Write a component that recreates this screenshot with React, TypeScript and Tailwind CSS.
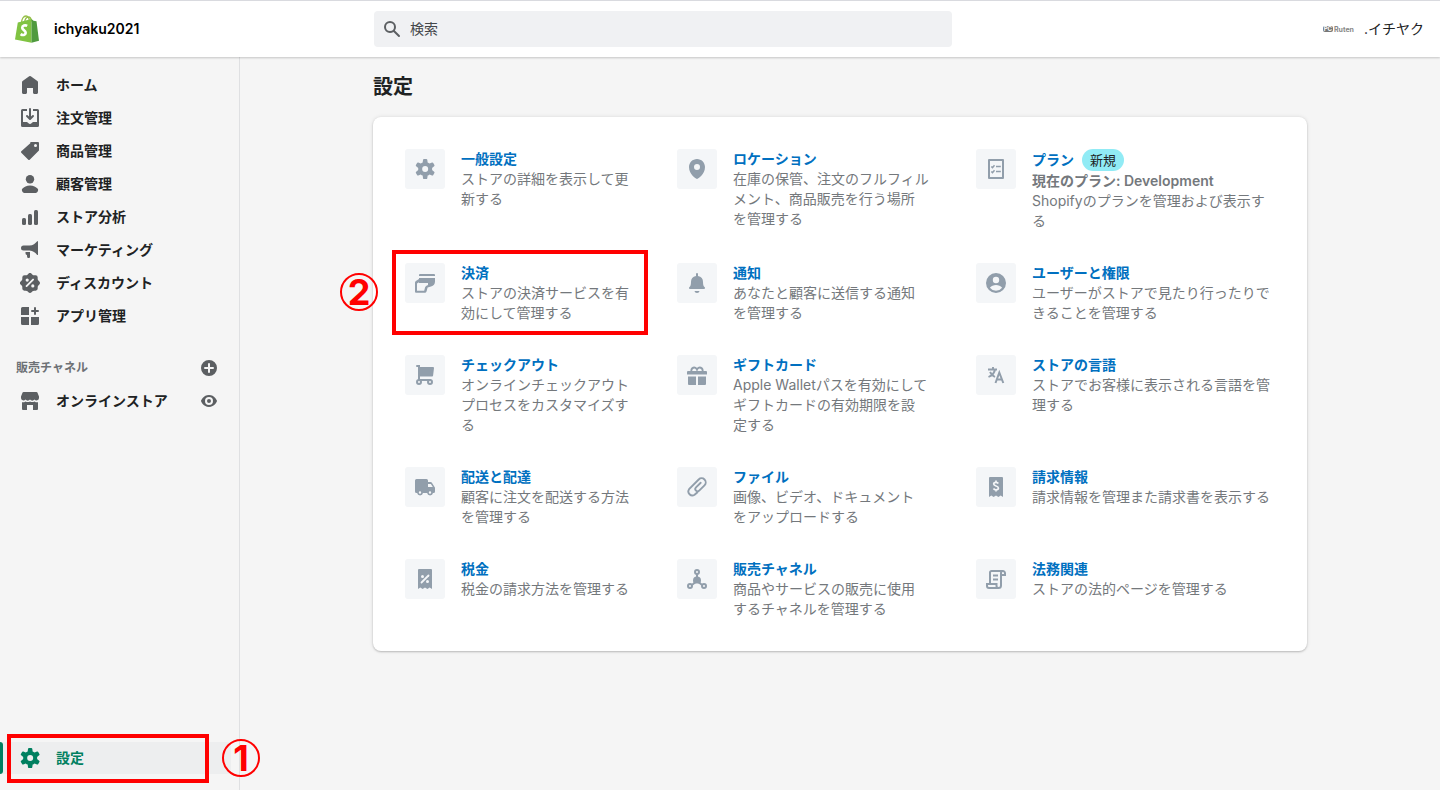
import type { ReactNode } from 'react';

type IconProps = { children: ReactNode; className?: string };

// All icons share a 20x20 grid
const Icon = ({ children, className = 'size-5' }: IconProps) => (
  <svg viewBox="0 0 20 20" fill="currentColor" fillRule="evenodd" aria-hidden="true" className={`${className} shrink-0`}>
    {children}
  </svg>
);

const gear = (
  <path d="M9.027 0a1 1 0 00-.99.859l-.37 2.598A6.993 6.993 0 005.742 4.57l-2.437-.98a1 1 0 00-1.239.428L.934 5.981a1 1 0 00.248 1.287l2.066 1.621a7.06 7.06 0 000 2.222l-2.066 1.621a1 1 0 00-.248 1.287l1.132 1.962a1 1 0 001.239.428l2.438-.979a6.995 6.995 0 001.923 1.113l.372 2.598a1 1 0 00.99.859h2.265a1 1 0 00.99-.859l.371-2.598a6.995 6.995 0 001.924-1.112l2.438.978a1 1 0 001.238-.428l1.133-1.962a1 1 0 00-.249-1.287l-2.065-1.621a7.063 7.063 0 000-2.222l2.065-1.621a1 1 0 00.249-1.287l-1.133-1.962a1 1 0 00-1.239-.428l-2.437.979a6.994 6.994 0 00-1.924-1.113L12.283.86a1 1 0 00-.99-.859H9.027zM10.16 13a3 3 0 100-6 3 3 0 000 6z" />
);

const receipt = <path d="M3 1a1 1 0 011-1h12a1 1 0 011 1v19l-2.3-1.6L12.4 20 10 18.4 7.6 20l-2.3-1.6L3 20V1z" />;

const navItems = [
  {
    label: 'ホーム',
    icon: <path d="M18 7.261V17.5c0 .841-.672 1.5-1.5 1.5h-2c-.828 0-1.5-.659-1.5-1.5V13H7v4.477C7 18.318 6.328 19 5.5 19h-2c-.828 0-1.5-.682-1.5-1.523V7.261a1.5 1.5 0 01.615-1.21l6.59-4.82a1.481 1.481 0 011.59 0l6.59 4.82A1.5 1.5 0 0118 7.26z" />,
  },
  {
    label: '注文管理',
    icon: (
      <>
        <path d="M11 1a1 1 0 10-2 0v7.586L7.707 7.293a1 1 0 00-1.414 1.414l3 3a1 1 0 001.414 0l3-3a1 1 0 00-1.414-1.414L11 8.586V1z" />
        <path d="M3 14V3h4V1H2.5A1.5 1.5 0 001 2.5v15A1.5 1.5 0 002.5 19h15a1.5 1.5 0 001.5-1.5v-15A1.5 1.5 0 0017.5 1H13v2h4v11h-3.5c-.775 0-1.388.662-1.926 1.244l-.11.12A1.994 1.994 0 0110 16a1.994 1.994 0 01-1.463-.637l-.111-.12C7.888 14.664 7.275 14 6.5 14H3z" />
      </>
    ),
  },
  {
    label: '商品管理',
    icon: <path d="M10.293 1.293A1 1 0 0111 1h7a1 1 0 011 1v7a1 1 0 01-.293.707l-9 9a1 1 0 01-1.414 0l-7-7a1 1 0 010-1.414l9-8zM15.5 6a1.5 1.5 0 100-3 1.5 1.5 0 000 3z" />,
  },
  {
    label: '顧客管理',
    icon: (
      <>
        <circle cx="10" cy="5.2" r="4.2" />
        <path d="M2.53 14.469c1.385-1.09 4.141-2.853 7.474-2.853 3.332 0 6.089 1.764 7.474 2.853.618.486.81 1.308.567 2.056l-.333 1.02A2.11 2.11 0 0115.706 19H4.301a2.11 2.11 0 01-2.005-1.455l-.333-1.02c-.245-.748-.052-1.57.567-2.056z" />
      </>
    ),
  },
  {
    label: 'ストア分析',
    icon: (
      <>
        <rect x="2" y="11" width="4" height="7" rx="1.5" />
        <rect x="8" y="7" width="4" height="11" rx="1.5" />
        <rect x="14" y="3" width="4" height="15" rx="1.5" />
      </>
    ),
  },
  {
    label: 'マーケティング',
    icon: (
      <>
        <path d="M17.2 1.2a.5.5 0 01.8.4v13a.5.5 0 01-.8.4C15.4 12.8 13 10.5 9.5 10.5h-6a2.5 2.5 0 010-5h6c3.5 0 5.9-2.2 7.7-4.3z" />
        <path d="M5.5 12H10v5a1 1 0 01-1 1h-.8a1 1 0 01-1-.8L6.9 15a2 2 0 01-1.4-2z" />
      </>
    ),
  },
  {
    label: 'ディスカウント',
    icon: <path d="M11.566.66a2.189 2.189 0 00-3.132 0l-.962.985a2.189 2.189 0 01-1.592.66l-1.377-.017a2.189 2.189 0 00-2.215 2.215l.016 1.377a2.189 2.189 0 01-.66 1.592l-.984.962a2.189 2.189 0 000 3.132l.985.962c.428.418.667.994.66 1.592l-.017 1.377a2.189 2.189 0 002.215 2.215l1.377-.016a2.189 2.189 0 011.592.66l.962.984c.859.88 2.273.88 3.132 0l.962-.985a2.189 2.189 0 011.592-.66l1.377.017a2.189 2.189 0 002.215-2.215l-.016-1.377a2.189 2.189 0 01.66-1.592l.984-.962c.88-.859.88-2.273 0-3.132l-.985-.962a2.189 2.189 0 01-.66-1.592l.017-1.377a2.189 2.189 0 00-2.215-2.215l-1.377.016a2.189 2.189 0 01-1.592-.66L11.566.66zM7.2 8.7a1.6 1.6 0 100-3.2 1.6 1.6 0 000 3.2zM13.7 5.9a.9.9 0 00-1.3 0l-6.5 6.5a.9.9 0 001.3 1.3l6.5-6.5a.9.9 0 000-1.3zM12.8 14.5a1.6 1.6 0 100-3.2 1.6 1.6 0 000 3.2z" />,
  },
  {
    label: 'アプリ管理',
    icon: (
      <>
        <path d="M1 2.5A1.5 1.5 0 012.5 1H9v8H1zM1 11h8v8H2.5A1.5 1.5 0 011 17.5zM11 11h8v6.5a1.5 1.5 0 01-1.5 1.5H11z" />
        <path d="M15 1a1 1 0 011 1v2h2a1 1 0 110 2h-2v2a1 1 0 11-2 0V6h-2a1 1 0 110-2h2V2a1 1 0 011-1z" />
      </>
    ),
  },
];

type Setting = {
  title: string;
  text: string;
  icon: ReactNode;
  badge?: string;
  plan?: string;
  step?: string;
};

const settings: Setting[] = [
  { title: '一般設定', text: 'ストアの詳細を表示して更\n新する', icon: gear },
  {
    title: 'ロケーション',
    text: '在庫の保管、注文のフルフィル\nメント、商品販売を行う場所\nを管理する',
    icon: <path d="M10 0C5.589 0 2 3.589 2 8c0 7.495 7.197 11.694 7.504 11.869a.996.996 0 00.992 0C10.803 19.694 18 15.495 18 8c0-4.412-3.589-8-8-8zm0 11a3 3 0 110-6 3 3 0 010 6z" />,
  },
  {
    title: 'プラン',
    text: 'Shopifyのプランを管理および表示す\nる',
    badge: '新規',
    plan: '現在のプラン: Development',
    icon: (
      <>
        <path d="M3 0h14a1 1 0 011 1v18a1 1 0 01-1 1H3a1 1 0 01-1-1V1a1 1 0 011-1zm1 2v16h12V2z" />
        <path d="M5.3 7.5l1.2 1.2 2-2.4M5.3 12.5l1.2 1.2 2-2.4M10 7.5h4.800M10 12.5h4.800" fill="none" stroke="currentColor" strokeWidth="1.500" />
      </>
    ),
  },
  {
    title: '決済',
    text: 'ストアの決済サービスを有\n効にして管理する',
    step: '2',
    icon: (
      <>
        <path d="M5 1h14a1 1 0 011 1v1H4V2a1 1 0 011-1z" />
        <path d="M4 5h16v3.5a5 5 0 01-4 4.900L12.600 14.500l-1 3.800a2 2 0 01-2 1.500H1a1 1 0 01-1-1V9.700a2 2 0 01.9-1.700L4 6zM4 10v-.8L2 10.400V17.800h7.200l.9-3.500a2.500 2.500 0 011.400-1.600L13 12v-2z" />
      </>
    ),
  },
  {
    title: '通知',
    text: 'あなたと顧客に送信する通知\nを管理する',
    icon: (
      <>
        <path d="M10 0a1 1 0 011 1v2.03A6 6 0 0116 9c0 2.8.6 4.5 1.700 5.300.7.6.3 1.700-.6 1.700H2.900c-.9 0-1.300-1.100-.6-1.700C3.400 13.500 4 11.800 4 9a6 6 0 015-5.970V1a1 1 0 011-1z" />
        <path d="M7.500 18h5c-.2 1.200-1.200 2-2.500 2s-2.300-.8-2.500-2z" />
      </>
    ),
  },
  {
    title: 'ユーザーと権限',
    text: 'ユーザーがストアで見たり行ったりで\nきることを管理する',
    icon: <path d="M10 0a10 10 0 100 20 10 10 0 000-20zm0 3.800a3.200 3.200 0 110 6.400 3.200 3.200 0 010-6.400zM3.900 14.800C5.300 13 7.500 12 10 12s4.700 1 6.100 2.800A7.700 7.700 0 0110 17.800a7.700 7.700 0 01-6.100-3z" />,
  },
  {
    title: 'チェックアウト',
    text: 'オンラインチェックアウト\nプロセスをカスタマイズす\nる',
    icon: (
      <>
        <path d="M2 1h2v13M4 15h11" fill="none" stroke="currentColor" strokeWidth="2" strokeLinecap="round" />
        <path d="M4 2h14a1 1 0 011 1.100l-.9 7.500a1 1 0 01-1 .9H4z" />
        <g fill="#f4f6f8" stroke="currentColor" strokeWidth="2">
          <circle cx="4" cy="17" r="2" />
          <circle cx="15" cy="17" r="2" />
        </g>
      </>
    ),
  },
  {
    title: 'ギフトカード',
    text: 'Apple Walletパスを有効にして\nギフトカードの有効期限を設\n定する',
    icon: (
      <>
        <path d="M4.500 6.500a2.800 2.800 0 115.500-2 2.800 2.800 0 115.500 2" fill="none" stroke="currentColor" strokeWidth="1.900" />
        <path d="M1 6h18a1 1 0 011 1v2.500H0V7a1 1 0 011-1zM1 11.500h8V20H2a1 1 0 01-1-1zM11 11.500h8V19a1 1 0 01-1 1h-7z" />
      </>
    ),
  },
  {
    title: 'ストアの言語',
    text: 'ストアでお客様に表示される言語を管\n理する',
    icon: (
      <>
        <path d="M7 2v3M2 4.500h9M9 4.500C8.500 8 6 10.500 2.500 12M4 7c1.200 2.300 3 4 5 5" fill="none" stroke="currentColor" strokeWidth="1.900" />
        <path d="M9.500 18L13.300 7.500 17.300 18M10.800 14.500h5" fill="none" stroke="currentColor" strokeWidth="2" />
      </>
    ),
  },
  {
    title: '配送と配達',
    text: '顧客に注文を配送する方法\nを管理する',
    icon: <path d="M1.500 2h10A1.500 1.500 0 0113 3.500V5h2.600a1.500 1.500 0 011.300.8L19.600 10c.3.400.4.700.4 1.100V14.500a1.500 1.500 0 01-1.500 1.500H18a3 3 0 01-5.900 0H8a3 3 0 01-5.900 0h-.6A1.500 1.500 0 010 14.500v-11A1.500 1.500 0 011.500 2zM13 7v3h4.800l-1.900-3zM5 14.300a1.200 1.200 0 100 2.400 1.200 1.200 0 000-2.400zm10 0a1.200 1.200 0 100 2.400 1.200 1.200 0 000-2.400z" />,
  },
  {
    title: 'ファイル',
    text: '画像、ビデオ、ドキュメント\nをアップロードする',
    icon: <path d="M10.500 15.200L7.600 17.800a4 4 0 01-5.500-5.600L11.700 2.500a4 4 0 015.800 5.800l-5.300 5.300a2.200 2.200 0 01-3.200-3.200L13.700 5.800" fill="none" stroke="currentColor" strokeWidth="1.900" strokeLinecap="round" />,
  },
  {
    title: '請求情報',
    text: '請求情報を管理また請求書を表示する',
    icon: (
      <>
        {receipt}
        <path d="M12.300 6.500C11.800 5.600 11 5.300 10 5.300c-1.300 0-2.300.7-2.300 1.800C7.700 9.600 12.400 8.300 12.400 11c0 1.100-1 1.800-2.400 1.800-1.100 0-2-.4-2.500-1.300M10 3.500v2M10 12.500v2" fill="none" stroke="#f4f6f8" strokeWidth="1.700" />
      </>
    ),
  },
  {
    title: '税金',
    text: '税金の請求方法を管理する',
    icon: (
      <>
        {receipt}
        <path d="M6.500 13.500l7-7" stroke="#f4f6f8" strokeWidth="1.800" strokeLinecap="round" />
        <circle cx="7.500" cy="7.500" r="1.500" fill="#f4f6f8" />
        <circle cx="12.500" cy="12.500" r="1.500" fill="#f4f6f8" />
      </>
    ),
  },
  {
    title: '販売チャネル',
    text: '商品やサービスの販売に使用\nするチャネルを管理する',
    icon: (
      <>
        <g fill="none" stroke="currentColor" strokeWidth="2">
          <circle cx="10" cy="3" r="2" />
          <circle cx="3" cy="17" r="2" />
          <circle cx="17" cy="17" r="2" />
          <path d="M10 5v6M4.800 16l4-3M15.200 16l-4-3" />
        </g>
        <path d="M10 7.500a4 4 0 014 4c0 1.200-.3 2-.8 3H6.800c-.5-1-.8-1.800-.8-3a4 4 0 014-4z" />
      </>
    ),
  },
  {
    title: '法務関連',
    text: 'ストアの法的ページを管理する',
    icon: (
      <path
        d="M4 14V3.500A1.500 1.500 0 015.500 2h11.300A2.200 2.200 0 0119 4.200V6h-4v10.500a2.500 2.500 0 01-2.500 2.500H3a2 2 0 01-2-2v-2h9.500v2c0 1.200.8 2 2 2M15 6V4c0-1.200.6-2 1.800-2M7 6.500h5M7 10.500h5"
        fill="none"
        stroke="currentColor"
        strokeWidth="2"
      />
    ),
  },
];

const Logo = () => (
  <svg viewBox="0 0 24 28" aria-label="Shopify" role="img" className="h-7 w-6 shrink-0">
    <path d="M6.500 8C6.500 4 8.500 1 11 1s3.300 2.500 3.500 6M9.500 7.500C10 4 11.800 2 13.500 2s2.700 1.500 3 4.500" fill="none" stroke="#95bf47" strokeWidth="1.300" />
    <path d="M2.800 7.600L16.500 4v23.800L0 24.500z" fill="#80c342" />
    <path d="M16.500 4l2 1.800 3 .4L24 25.800l-7.500 2z" fill="#4f9a3e" />
    <path d="M12.200 10.800c-2-1-4.900-.3-5 1.900-.1 2.400 3.700 2.500 3.500 5.200-.2 2.300-2.900 2.800-5.100 1.200" fill="none" stroke="#fff" strokeWidth="2.600" />
  </svg>
);

const StepMark = ({ step, className }: { step: string; className: string }) => (
  <span
    className={`${className} absolute z-10 flex size-[38px] items-center justify-center rounded-full border-2 border-[#f00] text-4xl leading-none font-bold text-[#f00]`}
  >
    {step}
  </span>
);

const TopBar = () => (
  <header className="relative z-10 flex h-[57px] shrink-0 items-center border-t border-[#d9dadf] bg-white pr-4 shadow-[0_1px_2px_rgba(0,0,0,0.2)]">
    <div className="flex w-[374px] shrink-0 items-center gap-[15px] pl-[15px]">
      <Logo />
      <span className="text-sm font-semibold text-black">ichyaku2021</span>
    </div>
    <div className="flex h-9 w-full max-w-[578px] items-center gap-2 rounded bg-[#f0f1f3] px-2">
      <label htmlFor="search" aria-label="検索">
        <Icon className="size-5 text-[#5c5f62]">
          <path d="M8 12a4 4 0 110-8 4 4 0 010 8zm9.707 4.293l-4.82-4.82A5.968 5.968 0 0014 8 6 6 0 002 8a6 6 0 006 6 5.968 5.968 0 003.473-1.113l4.82 4.82a1 1 0 001.414-1.414z" />
        </Icon>
      </label>
      <input id="search" type="search" placeholder="検索" className="w-full bg-transparent text-sm text-[#202223] outline-none placeholder:text-[#44474a]" />
    </div>
    <button type="button" className="ml-auto flex shrink-0 items-center gap-[10px] text-sm text-[#202223]">
      <span className="flex items-center gap-px text-[7px] leading-none font-bold text-[#888]">
        <span className="rounded-xs bg-[#777] px-px text-[6px] text-white">PC</span>
        Ruten
      </span>
      .イチヤク
    </button>
  </header>
);

const Sidebar = () => (
  <nav className="relative flex w-60 shrink-0 flex-col border-r border-[#dfe0e2] pt-3 pb-4">
    <ul className="flex flex-col gap-px">
      {navItems.map((item) => (
        <li key={item.label}>
          <a href="#" className="flex h-8 items-center gap-4 pl-5 text-sm font-semibold text-[#202223]">
            <Icon className="size-5 text-[#5c5f62]">{item.icon}</Icon>
            {item.label}
          </a>
        </li>
      ))}
    </ul>

    <div className="mt-5 flex h-8 items-center justify-between pr-5 pl-4">
      <h2 className="text-xs font-semibold text-[#6d7175]">販売チャネル</h2>
      <button type="button" aria-label="販売チャネルを追加" className="text-[#5c5f62]">
        <Icon>
          <path d="M10 2a8 8 0 100 16 8 8 0 000-16zM9 6a1 1 0 112 0v3h3a1 1 0 110 2h-3v3a1 1 0 11-2 0v-3H6a1 1 0 110-2h3z" />
        </Icon>
      </button>
    </div>
    <div className="mt-px flex h-8 items-center justify-between pr-5 pl-5">
      <a href="#" className="flex items-center gap-4 text-sm font-semibold text-[#202223]">
        <Icon className="size-5 text-[#5c5f62]">
          <path d="M3.500 1h13a1 1 0 01.9.6L19 5.500V7a2.500 2.500 0 01-4.500 1.500 2.800 2.800 0 01-4.500 0 2.800 2.800 0 01-4.500 0A2.500 2.500 0 011 7V5.500l1.600-3.900A1 1 0 013.500 1z" />
          <path d="M2 11.200c1.300.2 2.500-.1 3.500-.8 1.400.9 3.200.9 4.500 0 1.300.9 3.100.9 4.500 0 1 .7 2.200 1 3.500.8V18a1 1 0 01-1 1h-4v-5H7v5H3a1 1 0 01-1-1z" />
        </Icon>
        オンラインストア
      </a>
      <button type="button" aria-label="ストアを表示" className="text-[#5c5f62]">
        <Icon>
          <path d="M17.928 9.628C17.837 9.399 15.611 4 10 4S2.163 9.399 2.07 9.628a1.017 1.017 0 000 .744C2.163 10.601 4.389 16 10 16s7.837-5.399 7.928-5.628a1.017 1.017 0 000-.744zM10 14a4 4 0 110-8 4 4 0 010 8zm0-6a2 2 0 100 4 2 2 0 000-4z" />
        </Icon>
      </button>
    </div>

    <a
      href="#"
      aria-current="page"
      className="relative mt-auto mr-2 flex h-8 items-center gap-4 rounded-r bg-[#edeeef] pl-5 text-sm font-semibold text-[#008060]"
    >
      <span className="absolute inset-y-0 left-0 w-[3px] rounded-r bg-[#008060]" />
      <Icon>{gear}</Icon>
      設定
      <span className="absolute -top-2 -bottom-[9px] left-[7px] w-[202px] border-4 border-[#f00]" />
      <StepMark step="1" className="-top-[3px] left-[222px]" />
    </a>
  </nav>
);

const SettingItem = ({ item }: { item: Setting }) => (
  <li className="relative flex gap-4">
    <span className="flex size-10 shrink-0 items-center justify-center rounded-[3px] bg-[#f4f6f8] text-[#919eab]">
      <Icon>{item.icon}</Icon>
    </span>
    <div className="text-sm leading-5 text-[#74787c]">
      <div className="flex items-center gap-2">
        <a href="#" className="font-bold text-[#0070c0]">{item.title}</a>
        {item.badge && (
          <span className="rounded-full bg-[#91ebf5] px-2 py-px text-[13px] text-[#202223]">{item.badge}</span>
        )}
      </div>
      {item.plan && <p className="font-semibold">{item.plan}</p>}
      <p className="whitespace-pre">{item.text}</p>
    </div>
    {item.step && (
      <>
        <span className="pointer-events-none absolute -top-[13px] -right-[3px] -bottom-3 -left-[13px] border-4 border-[#f00]" />
        <StepMark step={item.step} className="top-[10px] -left-[65px]" />
      </>
    )}
  </li>
);

export default function App() {
  return (
    <div className="flex min-h-screen flex-col bg-[#f5f5f5] font-['Inter','Noto_Sans_CJK_JP',sans-serif]">
      <TopBar />
      <div className="flex flex-1">
        <Sidebar />
        <main className="min-w-0 flex-1">
          <div className="mx-auto max-w-[998px] px-8 py-4">
            <h1 className="text-xl leading-7 font-semibold text-[#202223]">設定</h1>
            <ul className="mt-4 grid grid-cols-[240fr_267fr_299fr] gap-8 rounded-lg bg-white p-8 shadow-[0_0_4px_rgba(23,24,24,0.1),0_1px_2px_rgba(0,0,0,0.2)]">
              {settings.map((item) => (
                <SettingItem key={item.title} item={item} />
              ))}
            </ul>
          </div>
        </main>
      </div>
    </div>
  );
}
